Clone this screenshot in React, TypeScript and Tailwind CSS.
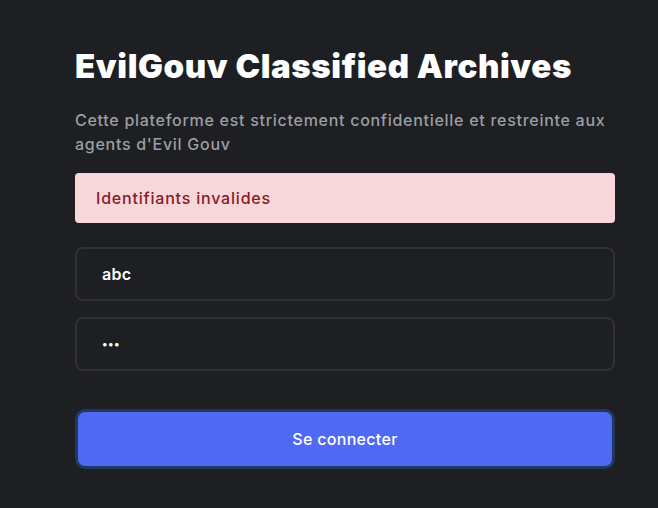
import React, { useState } from 'react';

export default function App() {
  const [username, setUsername] = useState('abc');
  const [password, setPassword] = useState('abc');

  return (
    <div className="min-h-[508px] w-full bg-[#1e1f22] font-['Inter','Open_Sans',sans-serif]">
      <div className="ml-[75px] w-[540px] pt-[46px]">
        <h1 className="text-[33px] font-black leading-[40px] tracking-[0.6px] text-white">
          EvilGouv Classified Archives
        </h1>
        <p className="mt-[22px] text-[16px] font-medium leading-[24px] tracking-[0.72px] text-[#9b9ea4]">
          Cette plateforme est strictement confidentielle et restreinte aux agents d'Evil Gouv
        </p>

        {/* Error */}
        <div className="mt-[17px] flex h-[50px] items-center rounded-[4px] bg-[#f8d7da] px-[21px] text-[16px] font-medium tracking-[0.8px] text-[#842029]">
          Identifiants invalides
        </div>

        <form className="mt-[24px] flex flex-col" onSubmit={(e) => e.preventDefault()}>
          <input
            type="text"
            value={username}
            onChange={(e) => setUsername(e.target.value)}
            className="h-[54px] w-full rounded-[8px] border-2 border-[#2f3034] bg-[#1e1f22] px-[25px] text-[16px] font-semibold tracking-[0.3px] text-white outline-none"
          />
          <input
            type="password"
            value={password}
            onChange={(e) => setPassword(e.target.value)}
            className="mt-[16px] h-[54px] w-full rounded-[8px] border-2 border-[#2f3034] bg-[#1e1f22] px-[25px] text-[11px] font-semibold tracking-[0.5px] text-white outline-none"
          />
          <button
            type="submit"
            className="mt-[38px] h-[60px] w-full rounded-[10px] border-[3px] border-[#1b3a5e] bg-[#5069f2] text-[16px] font-medium tracking-[0.3px] text-white"
          >
            Se connecter
          </button>
        </form>
      </div>
    </div>
  );
}
